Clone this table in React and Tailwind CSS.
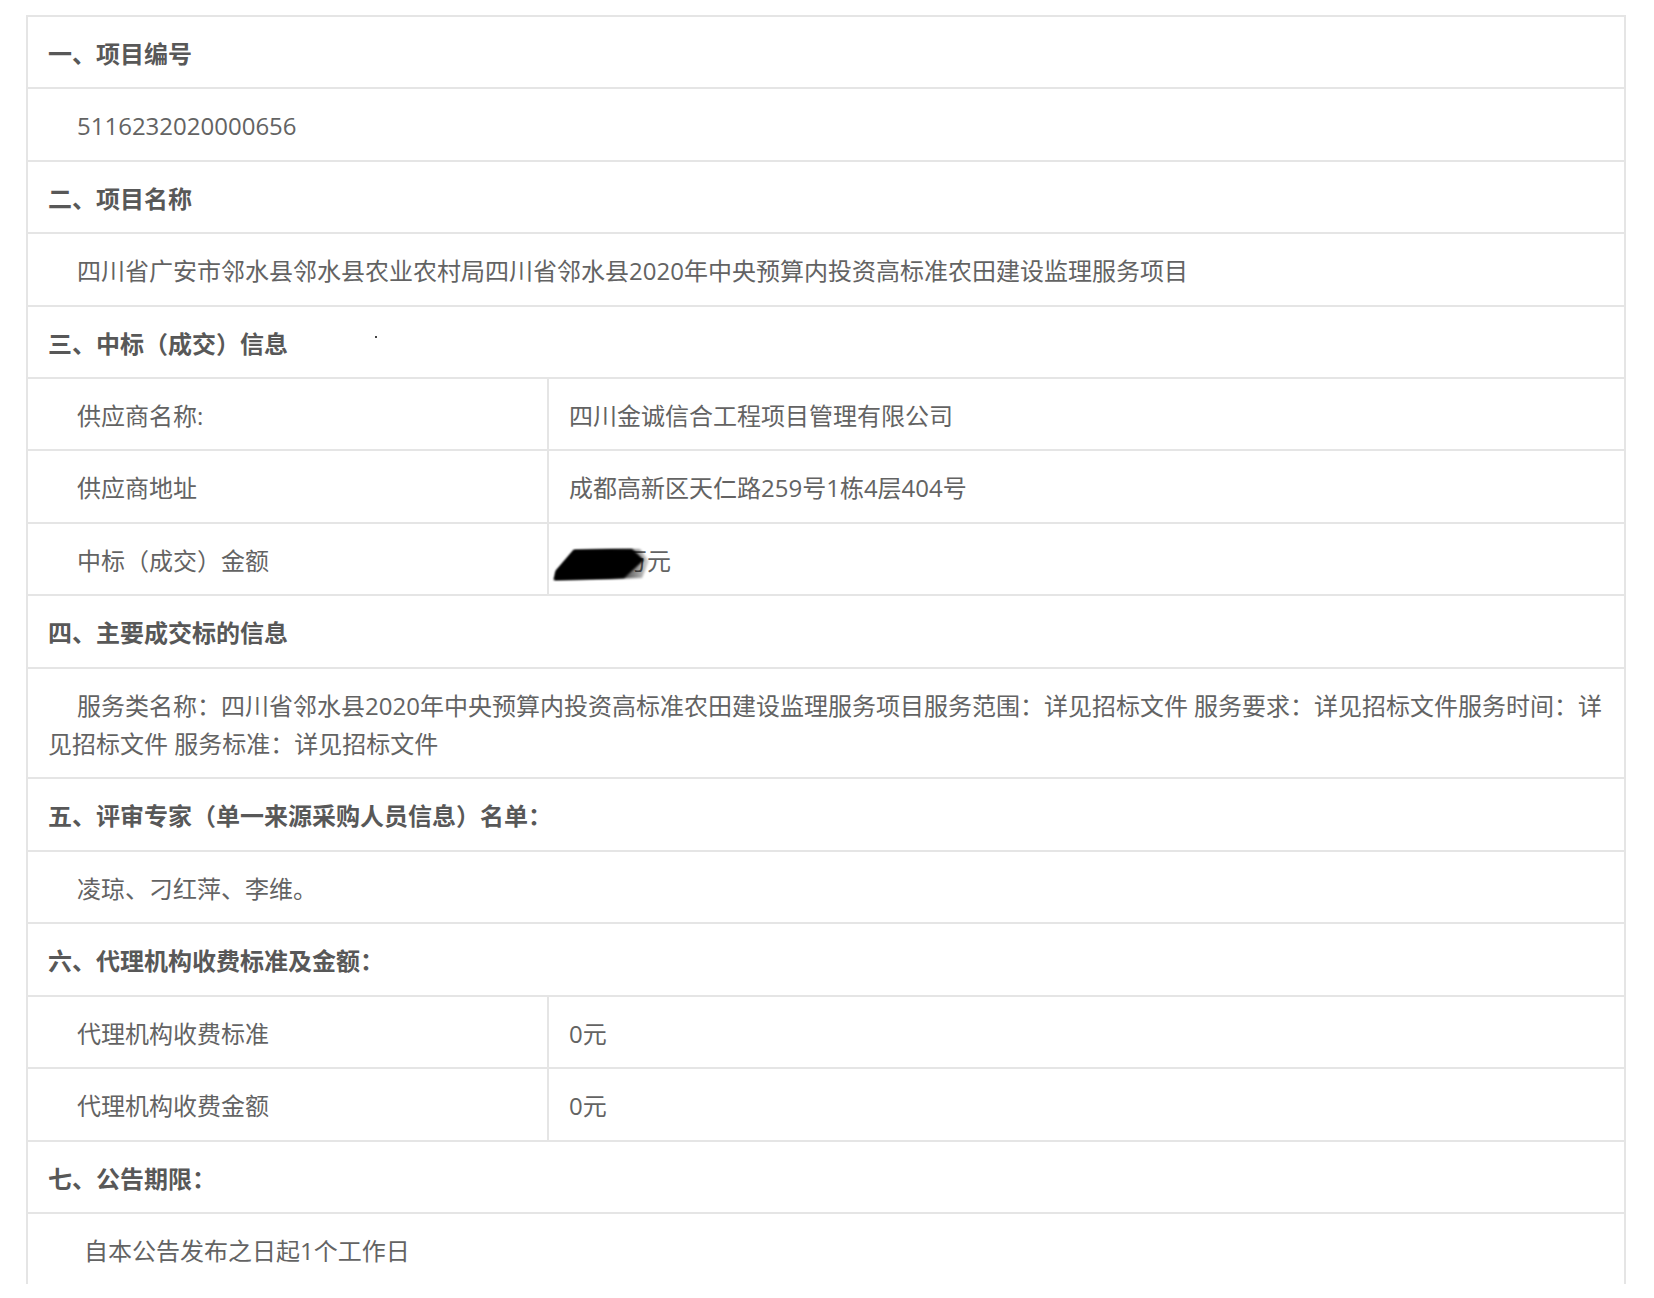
import React from 'react';

const Heading = ({ children }) => (
  <div className="border-b-2 border-[#e5e5e5] px-5 pt-[18px] pb-[14px] leading-[38.4px] font-bold text-[#585858]">{children}</div>
);

const Line = ({ children, indent = 'indent-[29px]' }) => (
  <div className={`border-b-2 border-[#e5e5e5] px-5 pt-[18px] pb-[14px] leading-[38.4px] ${indent}`}>{children}</div>
);

const Pair = ({ label, children }) => (
  <div className="flex border-b-2 border-[#e5e5e5] leading-[38.4px]">
    <div className="w-[521px] shrink-0 border-r-2 border-[#e5e5e5] px-5 pt-[18px] pb-[14px] indent-[29px]">{label}</div>
    <div className="relative flex-1 px-5 pt-[18px] pb-[14px]">{children}</div>
  </div>
);

const Redaction = () => (
  <svg className="absolute left-[3px] top-[23px]" width="100" height="36" viewBox="0 0 100 36">
    <defs>
      <filter id="soft" x="-10%" y="-10%" width="120%" height="120%">
        <feGaussianBlur stdDeviation="0.8" />
      </filter>
      <linearGradient id="fade" x1="0" x2="1" y1="0" y2="0">
        <stop offset="0.6" stopColor="#000" stopOpacity="1" />
        <stop offset="1" stopColor="#000" stopOpacity="0.15" />
      </linearGradient>
    </defs>
    <polygon points="22,3 88,2 97,14 90,31 2,33 4,24" fill="url(#fade)" filter="url(#soft)" />
    <polygon points="22,3 80,2 92,13 72,31 2,33 4,24" fill="#000" filter="url(#soft)" />
  </svg>
);

export default function App() {
  return (
    <div className="min-h-[1298px] bg-white pt-[15px] pl-[26px] font-['Open_Sans','Noto_Sans_CJK_SC',sans-serif] text-[24px] text-[#636363]">
      <div className="w-[1600px] border-x-2 border-t-2 border-[#e5e5e5]">
        <Heading>一、项目编号</Heading>
        <Line>5116232020000656</Line>
        <Heading>二、项目名称</Heading>
        <Line>四川省广安市邻水县邻水县农业农村局四川省邻水县2020年中央预算内投资高标准农田建设监理服务项目</Line>
        <Heading>
          三、中标（成交）信息
          <span className="ml-[87px] inline-block h-[2px] w-[2px] translate-y-[11px] bg-[#444] align-top"></span>
        </Heading>
        <Pair label="供应商名称:">四川金诚信合工程项目管理有限公司</Pair>
        <Pair label="供应商地址">成都高新区天仁路259号1栋4层404号</Pair>
        <Pair label="中标（成交）金额">
          <span className="pl-[54px]">万元</span>
          <Redaction />
        </Pair>
        <Heading>四、主要成交标的信息</Heading>
        <Line>
          <span className="whitespace-nowrap">服务类名称：四川省邻水县2020年中央预算内投资高标准农田建设监理服务项目服务范围：详见招标文件 服务要求：详见招标文件服务时间：详</span>
          <br />
          见招标文件 服务标准：详见招标文件
        </Line>
        <Heading>五、评审专家（单一来源采购人员信息）名单：</Heading>
        <Line>凌琼、刁红萍、李维。</Line>
        <Heading>六、代理机构收费标准及金额：</Heading>
        <Pair label="代理机构收费标准">0元</Pair>
        <Pair label="代理机构收费金额">0元</Pair>
        <Heading>七、公告期限：</Heading>
        <div className="px-5 pt-[18px] pb-[14px] leading-[38.4px] indent-[36px]">自本公告发布之日起1个工作日</div>
      </div>
    </div>
  );
}
